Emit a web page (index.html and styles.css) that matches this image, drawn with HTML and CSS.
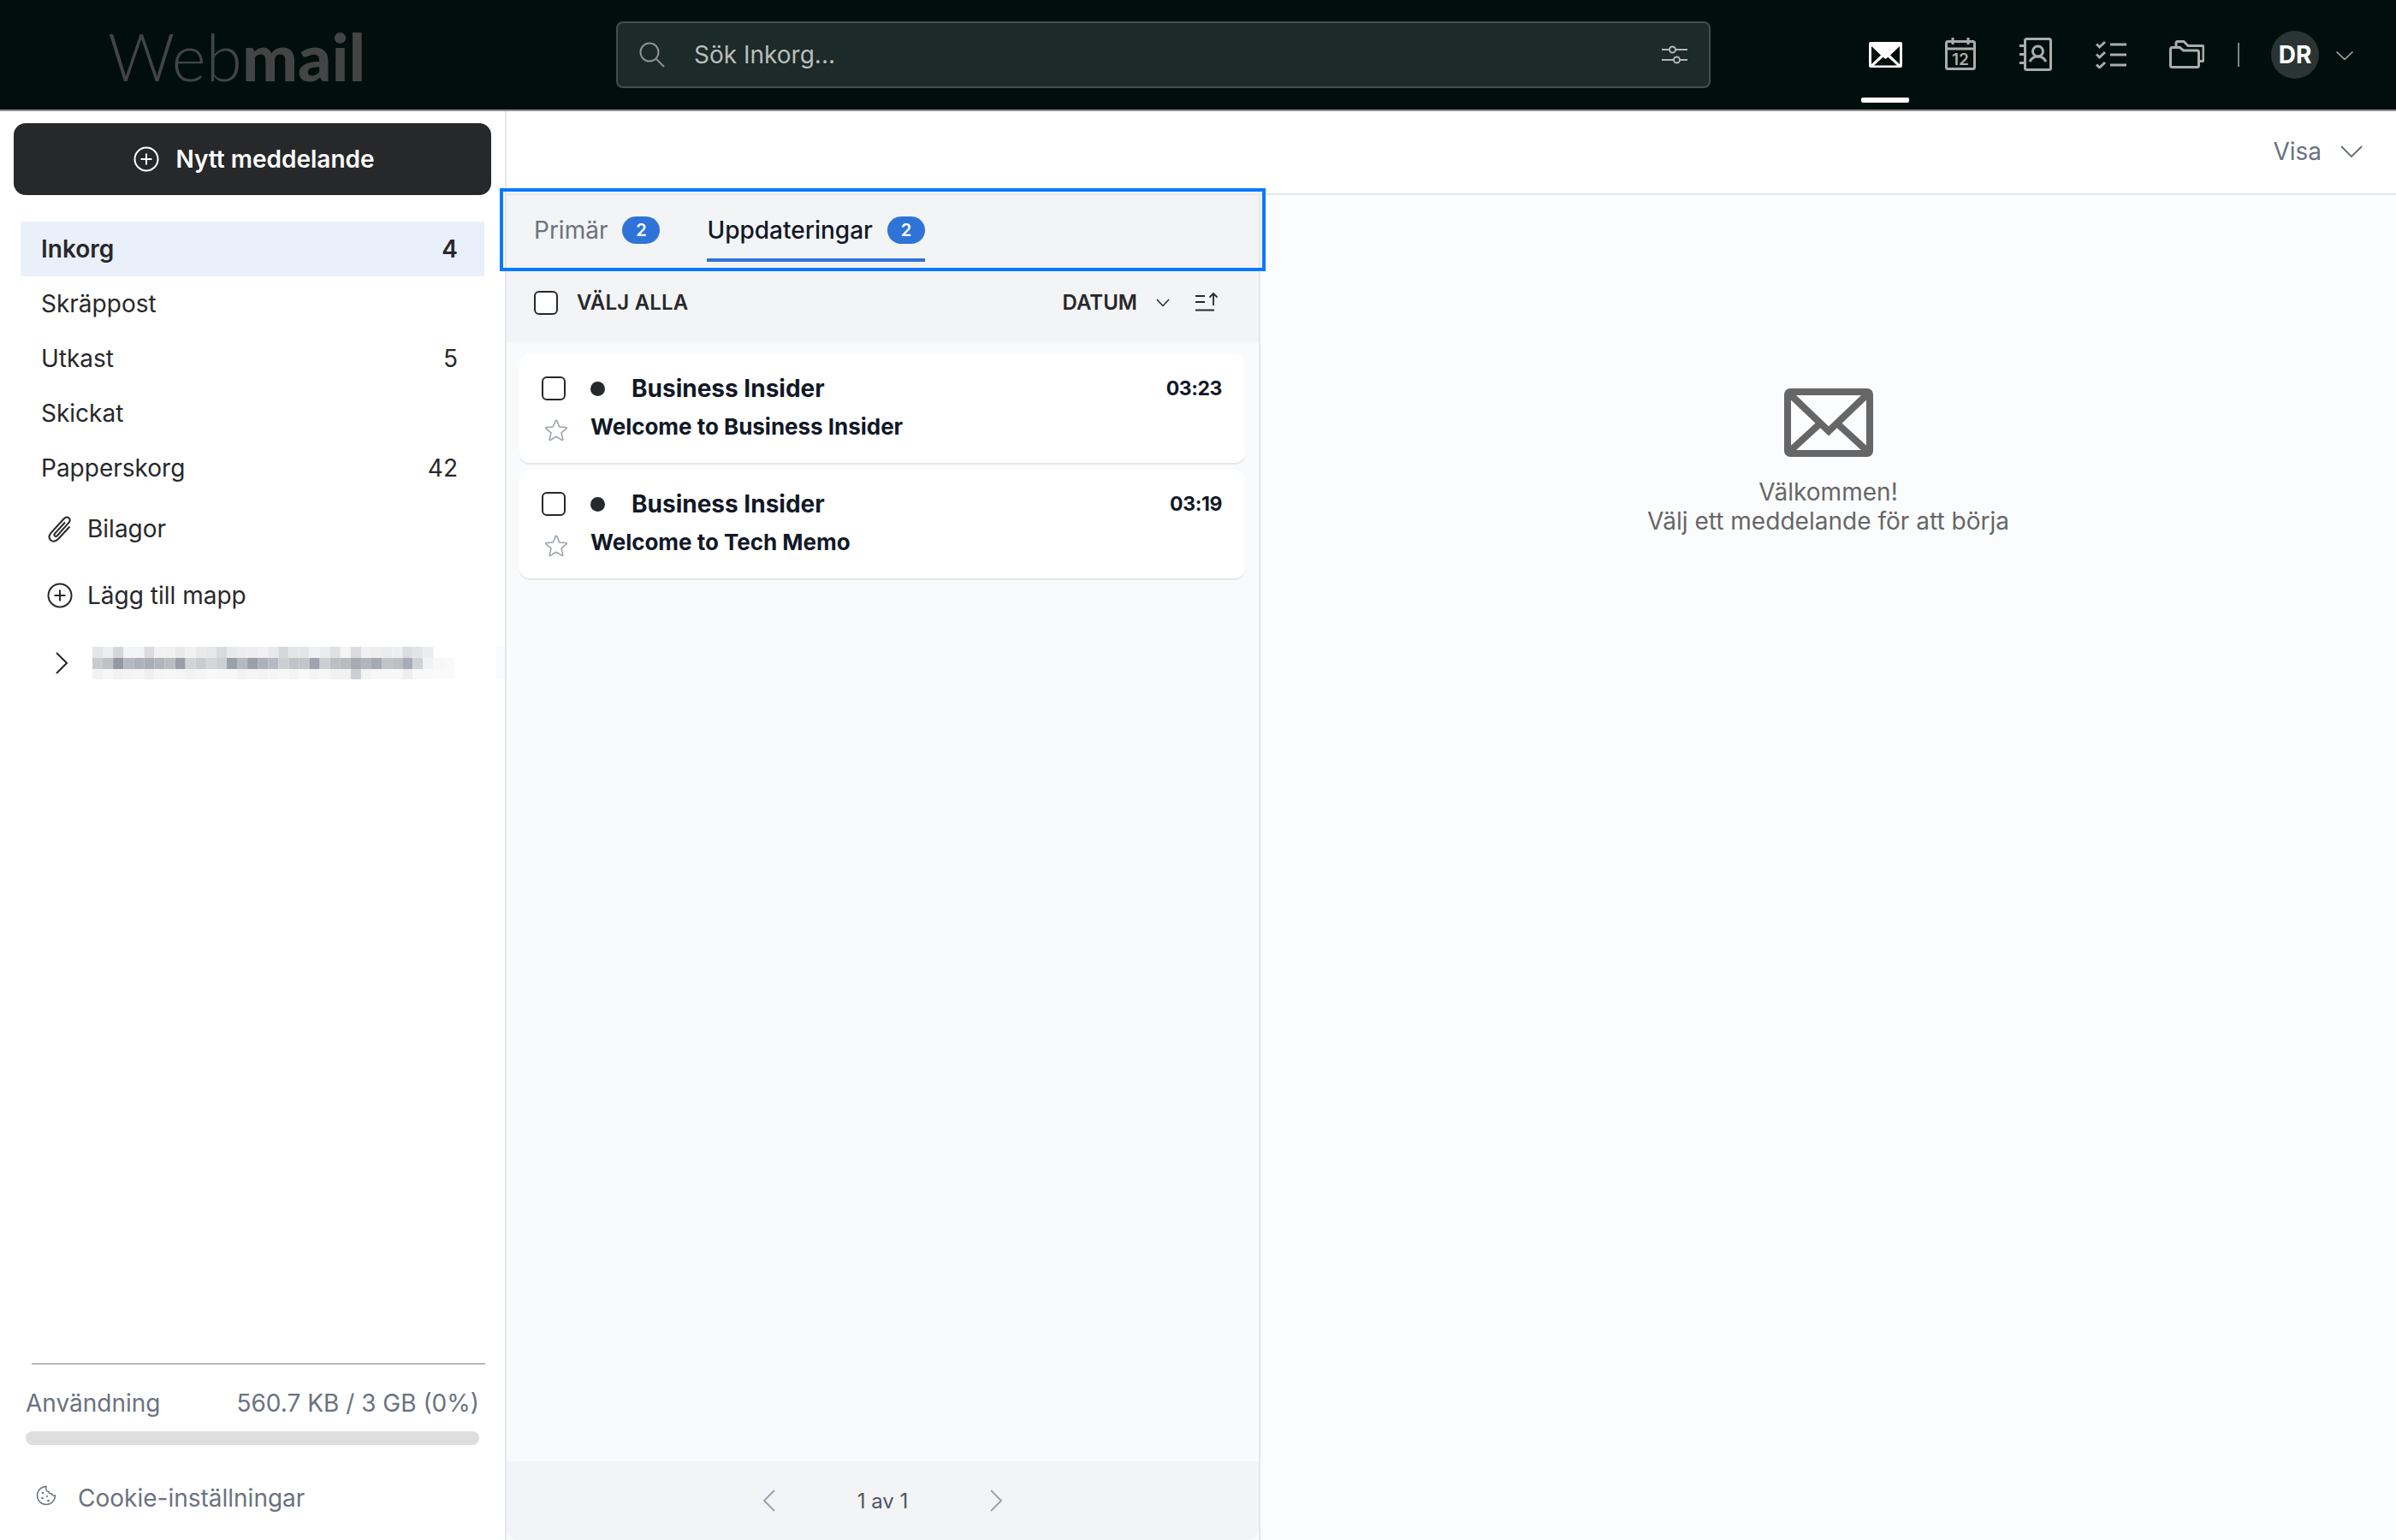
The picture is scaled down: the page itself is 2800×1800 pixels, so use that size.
FILE: index.html
```html
<!DOCTYPE html>
<html lang="sv">
<head>
<meta charset="utf-8">
<title>Webmail</title>
<link rel="stylesheet" href="styles.css">
</head>
<body>
<header class="topnav">
  <div class="logo"><span class="logo-thin">Web</span><span class="logo-bold">mail</span></div>
  <div class="search">
    <svg class="search-icon" viewBox="0 0 30 30"><circle cx="12" cy="12" r="10.500"/><path d="M20 20l9 9"/></svg>
    <span class="search-text">Sök Inkorg...</span>
    <svg class="search-filter" viewBox="0 0 30 24"><path d="M0 6h9M16 6h14M0 18h14M21 18h9"/><circle cx="12.500" cy="6" r="3.500"/><circle cx="17.500" cy="18" r="3.500"/></svg>
  </div>
  <nav class="apps">
    <div class="app app-active">
      <svg class="i-mail" viewBox="0 0 39 30"><rect width="39" height="30" rx="2" fill="#fff"/><path d="M3 5l11 10.500L3 26zM36 5L25 15.500 36 26zM6 27.500l10.500-9.800 3 2.300 3-2.300L33 27.500z" fill="#000f0c"/></svg>
    </div>
    <div class="app">
      <svg class="i-cal" viewBox="0 0 36 38"><rect x="1.500" y="4.500" width="33" height="32" rx="2"/><path d="M1.500 13h33M9 0v8M27 0v8"/><text x="18" y="32" class="cal-num">12</text></svg>
    </div>
    <div class="app">
      <svg class="i-contact" viewBox="0 0 38 39"><rect x="6.500" y="1.500" width="30" height="36" rx="2"/><circle cx="21.500" cy="16" r="6"/><path d="M12 28c2-4 5-6 9.500-6s7.500 2 9.500 6M0 9.500h6M0 19.500h6M0 29.500h6"/></svg>
    </div>
    <div class="app">
      <svg class="i-tasks" viewBox="0 0 36 33"><path d="M1 4.500l3.500 3.500L11 2M1 16.500l3.500 3.500L11 14M1 28.500l3.500 3.500L11 26"/><path d="M17 5h19M17 17h19M17 29h19"/></svg>
    </div>
    <div class="app">
      <svg class="i-folder" viewBox="0 0 41 33"><path d="M8 7V3.500c0-1 .700-2 2-2h7l5 5h16.500c1 0 1.500.700 1.500 1.500v15c0 1-.700 1.500-1.500 1.500H35"/><path d="M1.500 10.500c0-1 .700-2 2-2h9l4 3.500h16c1 0 2 .700 2 2v15.500c0 1-.700 2-2 2h-29c-1 0-2-.700-2-2z"/></svg>
    </div>
    <span class="nav-sep"></span>
    <div class="avatar">DR</div>
    <svg class="nav-chev" viewBox="0 0 20 10"><path d="M.500.500L10 9.500 19.500.500"/></svg>
  </nav>
</header>

<div class="shell">
  <aside class="sidebar">
    <button class="compose">
      <svg class="plus plus-light" viewBox="0 0 30 30"><circle cx="15" cy="15" r="13.500"/><path d="M15 8.500v13M8.500 15h13"/></svg>
      <span>Nytt meddelande</span>
    </button>
    <ul class="folders">
      <li class="folder folder-active"><span>Inkorg</span><span>4</span></li>
      <li class="folder"><span>Skräppost</span></li>
      <li class="folder"><span>Utkast</span><span>5</span></li>
      <li class="folder"><span>Skickat</span></li>
      <li class="folder"><span>Papperskorg</span><span>42</span></li>
    </ul>
    <div class="extra extra-attach">
      <svg class="clip" viewBox="0 0 28 32"><path d="M25.500 13.500L12 28c-3 3-6.500 3.200-8.800 1.200-2.300-2.200-2.200-5.500.600-8.600L18.500 4.500c1.900-2.100 4.300-2.500 6-1.100 1.700 1.500 1.500 3.800-.300 5.800L11 24c-1 1-2.200 1.100-3 .400-.800-.800-.700-2 .300-3.100L20 8.500"/></svg>
      <span>Bilagor</span>
    </div>
    <div class="extra extra-add">
      <svg class="plus" viewBox="0 0 30 30"><circle cx="15" cy="15" r="13.500"/><path d="M15 8.500v13M8.500 15h13"/></svg>
      <span>Lägg till mapp</span>
    </div>
    <div class="account">
      <svg class="acc-chev" viewBox="0 0 14 26"><path d="M1 1l12 12L1 25"/></svg>
      <svg class="pixels" viewBox="0 0 484 38" preserveAspectRatio="none" aria-hidden="true">
        <g class="r1">
          <rect x="0" fill="#e4e5e9"/><rect x="12" fill="#ecedef"/><rect x="24" fill="#d4d6da"/><rect x="36" fill="#f3f4f6"/><rect x="48" fill="#f3f4f6"/><rect x="60" fill="#dbdde0"/><rect x="72" fill="#f1f1f2"/><rect x="84" fill="#f1f1f2"/><rect x="96" fill="#e8e9eb"/><rect x="108" fill="#f2f2f2"/><rect x="120" fill="#e8e9eb"/><rect x="132" fill="#e6e7e9"/><rect x="144" fill="#d9dade"/><rect x="156" fill="#e8e9eb"/><rect x="168" fill="#ecedef"/><rect x="180" fill="#eeeef0"/><rect x="192" fill="#f0f1f3"/><rect x="204" fill="#e8e9eb"/><rect x="216" fill="#d4d8da"/><rect x="228" fill="#e4e5e7"/><rect x="240" fill="#e4e5e7"/><rect x="252" fill="#f0f1f3"/><rect x="264" fill="#ebecee"/><rect x="276" fill="#dfe0e3"/><rect x="288" fill="#f4f4f4"/><rect x="300" fill="#dadbdf"/><rect x="312" fill="#f1f1f2"/><rect x="324" fill="#eeeef0"/><rect x="336" fill="#ebecee"/><rect x="348" fill="#eeeff0"/><rect x="360" fill="#dcdde1"/><rect x="372" fill="#e3e4e6"/><rect x="384" fill="#ebecee"/>
        </g>
        <g class="r2">
          <rect x="0" fill="#c8ccd0"/><rect x="12" fill="#c0c1c5"/><rect x="24" fill="#9498a2"/><rect x="36" fill="#b5b9c2"/><rect x="48" fill="#adb1ba"/><rect x="60" fill="#a9adb6"/><rect x="72" fill="#b0b4bb"/><rect x="84" fill="#bcbcc0"/><rect x="96" fill="#9a9ea6"/><rect x="108" fill="#d2d3d6"/><rect x="120" fill="#c8cbcf"/><rect x="132" fill="#d3d6da"/><rect x="144" fill="#cdd0d3"/><rect x="156" fill="#9ba1a9"/><rect x="168" fill="#b4b9c0"/><rect x="180" fill="#9b9fa7"/><rect x="192" fill="#adb1ba"/><rect x="204" fill="#b6bac2"/><rect x="216" fill="#cbcfd3"/><rect x="228" fill="#c0c3c8"/><rect x="240" fill="#c2c5c9"/><rect x="252" fill="#9fa3ad"/><rect x="264" fill="#cbced3"/><rect x="276" fill="#bcc0c4"/><rect x="288" fill="#b8bcbe"/><rect x="300" fill="#a6abb2"/><rect x="312" fill="#b2b6bc"/><rect x="324" fill="#a6aab2"/><rect x="336" fill="#c2c3c7"/><rect x="348" fill="#bcc0c3"/><rect x="360" fill="#a8acb7"/><rect x="372" fill="#cdd2d5"/><rect x="384" fill="#f0f1f3"/><rect x="396" fill="#f7f7f8"/><rect x="408" fill="#f9f9f9"/>
        </g>
        <g class="r3">
          <rect x="0" fill="#f3f3f4"/><rect x="12" fill="#f6f7f7"/><rect x="24" fill="#f1f2f4"/><rect x="36" fill="#f4f4f5"/><rect x="48" fill="#f5f5f5"/><rect x="60" fill="#eeeff1"/><rect x="72" fill="#f6f6f6"/><rect x="84" fill="#f6f7f7"/><rect x="96" fill="#f5f5f6"/><rect x="108" fill="#f1f2f3"/><rect x="120" fill="#f3f4f5"/><rect x="132" fill="#f8f9f9"/><rect x="144" fill="#f7f7f8"/><rect x="156" fill="#f7f7f8"/><rect x="168" fill="#f1f2f4"/><rect x="180" fill="#f5f5f6"/><rect x="192" fill="#f3f3f4"/><rect x="204" fill="#f6f6f7"/><rect x="216" fill="#f8f8f8"/><rect x="228" fill="#f3f4f6"/><rect x="240" fill="#f8f9f9"/><rect x="252" fill="#f3f4f6"/><rect x="264" fill="#f8f8f8"/><rect x="276" fill="#f0f1f3"/><rect x="288" fill="#f0f1f3"/><rect x="300" fill="#ccd0d4"/><rect x="312" fill="#f3f3f4"/><rect x="324" fill="#f7f7f8"/><rect x="336" fill="#f6f7f8"/><rect x="348" fill="#f7f8f8"/><rect x="360" fill="#edeef0"/><rect x="372" fill="#f9f9f9"/><rect x="384" fill="#f9f9f9"/><rect x="396" fill="#fafafa"/><rect x="408" fill="#fafafa"/>
        </g>
        <rect class="ghost" x="469" fill="#fafafa"/>
      </svg>
    </div>
    <div class="side-foot">
      <div class="usage"><span>Användning</span><span>560.7 KB / 3 GB (0%)</span></div>
      <div class="meter"></div>
      <div class="cookies">
        <svg class="cookie" viewBox="0 0 24 24"><path d="M12 1.500a10.500 10.500 0 1 0 10.500 10.500c-2 .500-3.500-.300-4-2-1.800.200-3.300-.800-3.500-2.500-2 0-3.300-1.200-3-3-.500-1-.500-2 0-3z"/><circle class="crumb" cx="8" cy="9" r="1.300"/><circle class="crumb" cx="7.500" cy="15" r="1.300"/><circle class="crumb" cx="13" cy="13" r="1.100"/><circle class="crumb" cx="14.500" cy="18" r="1.300"/></svg>
        <span>Cookie-inställningar</span>
      </div>
    </div>
  </aside>

  <main class="main">
    <div class="viewbar">
      <span>Visa</span>
      <svg class="view-chev" viewBox="0 0 26 14"><path d="M1 1l12 12L25 1"/></svg>
    </div>
    <div class="panes">
      <section class="list">
        <div class="tabs">
          <div class="tab"><span>Primär</span><span class="badge">2</span></div>
          <div class="tab tab-active"><span>Uppdateringar</span><span class="badge">2</span></div>
          <div class="focus-ring"></div>
        </div>
        <div class="toolbar">
          <span class="check"></span>
          <span class="select-all">VÄLJ ALLA</span>
          <span class="sort-label">DATUM</span>
          <svg class="sort-chev" viewBox="0 0 16 10"><path d="M1 1l7 7.500L15 1"/></svg>
          <svg class="sort-icon" viewBox="0 0 28 23"><path d="M0 5h11M0 12h11M0 21.500h22M21 16V2M16.500 6.500L21 2l4.500 4.500"/></svg>
        </div>
        <div class="messages">
          <article class="message">
            <span class="check"></span>
            <div class="sender"><span class="dot"></span><span>Business Insider</span></div>
            <time class="time">03:23</time>
            <svg class="star" viewBox="0 0 24 24"><path d="M11.480 3.499a.562.562 0 011.040 0l2.125 5.111a.563.563 0 00.475.345l5.518.442c.499.040.701.663.321.988l-4.204 3.602a.563.563 0 00-.182.557l1.285 5.385a.562.562 0 01-.840.610l-4.725-2.885a.562.562 0 00-.586 0L6.982 20.540a.562.562 0 01-.840-.610l1.285-5.386a.562.562 0 00-.182-.557l-4.204-3.602a.563.563 0 01.321-.988l5.518-.442a.563.563 0 00.475-.345L11.480 3.500z"/></svg>
            <div class="subject">Welcome to Business Insider</div>
          </article>
          <article class="message">
            <span class="check"></span>
            <div class="sender"><span class="dot"></span><span>Business Insider</span></div>
            <time class="time">03:19</time>
            <svg class="star" viewBox="0 0 24 24"><path d="M11.480 3.499a.562.562 0 011.040 0l2.125 5.111a.563.563 0 00.475.345l5.518.442c.499.040.701.663.321.988l-4.204 3.602a.563.563 0 00-.182.557l1.285 5.385a.562.562 0 01-.840.610l-4.725-2.885a.562.562 0 00-.586 0L6.982 20.540a.562.562 0 01-.840-.610l1.285-5.386a.562.562 0 00-.182-.557l-4.204-3.602a.563.563 0 01.321-.988l5.518-.442a.563.563 0 00.475-.345L11.480 3.500z"/></svg>
            <div class="subject">Welcome to Tech Memo</div>
          </article>
        </div>
        <div class="pager">
          <svg class="pager-chev" viewBox="0 0 14 26"><path d="M13 1L1 13l12 12"/></svg>
          <span>1 av 1</span>
          <svg class="pager-chev" viewBox="0 0 14 26"><path d="M1 1l12 12L1 25"/></svg>
        </div>
      </section>
      <section class="reader">
        <svg class="empty-mail" viewBox="0 0 104 80"><rect x="4" y="4" width="96" height="72" rx="3"/><path d="M6 6l46 44L98 6M6 74l36-33M98 74L62 41"/></svg>
        <p class="welcome">Välkommen!<br>Välj ett meddelande för att börja</p>
      </section>
    </div>
  </main>
</div>
</body>
</html>
```

FILE: styles.css
```css
* { box-sizing: border-box; }
html, body { margin: 0; padding: 0; }
body {
  width: 2800px;
  height: 1800px;
  overflow: hidden;
  display: flex;
  flex-direction: column;
  font-family: "Inter", "Liberation Sans", sans-serif;
  font-size: 28px;
  color: #27282a;
  background: #fff;
}
svg { display: block; flex: none; fill: none; }

/* top navigation */
.topnav {
  height: 130px;
  flex: none;
  display: flex;
  align-items: flex-start;
  background: #000f0c;
  border-bottom: 2px solid #8d918f;
}
.logo {
  width: 720px;
  padding: 20px 0 0 126px;
  font-family: "Lato", sans-serif;
  font-size: 77px;
  line-height: 90px;
  color: #434444;
}
.logo-thin { font-weight: 300; }
.logo-bold { font-weight: 900; }
.search {
  width: 1279px;
  height: 78px;
  margin-top: 25px;
  padding: 0 25px;
  display: flex;
  align-items: center;
  background: #1c2a28;
  border: 2px solid #414f4c;
  border-radius: 8px;
}
.search-icon { width: 30px; height: 30px; stroke: #8c9492; stroke-width: 2; }
.search-text { margin-left: 34px; flex: 1; color: #b9bdbc; font-size: 28px; }
.search-filter { width: 30px; height: 24px; stroke: #b2b6b5; stroke-width: 2; }
.apps {
  flex: 1;
  display: flex;
  align-items: flex-start;
  padding-left: 176px;
}
.app {
  width: 56px;
  height: 128px;
  margin-right: 32px;
  display: flex;
  justify-content: center;
  position: relative;
}
.app svg { stroke: #a9adab; stroke-width: 3; }
.app-active::after {
  content: "";
  position: absolute;
  left: 0;
  right: 0;
  top: 114px;
  height: 6px;
  border-radius: 2px;
  background: #fff;
}
.i-mail { width: 39px; height: 30px; margin-top: 49px; stroke: none !important; }
.i-cal { width: 36px; height: 38px; margin-top: 44px; }
.cal-num {
  fill: #a9adab;
  stroke: none;
  font-family: "Inter", sans-serif;
  font-size: 19px;
  font-weight: 600;
  text-anchor: middle;
}
.i-contact { width: 38px; height: 39px; margin-top: 44px; }
.i-tasks { width: 36px; height: 33px; margin-top: 47px; }
.i-folder { width: 41px; height: 33px; margin-top: 47px; }
.nav-sep { width: 2px; height: 28px; margin: 50px 37px 0 0; background: #7f8482; }
.avatar {
  width: 56px;
  height: 56px;
  margin-top: 36px;
  border-radius: 50%;
  background: #2a3533;
  color: #fff;
  font-size: 28px;
  font-weight: 700;
  display: flex;
  align-items: center;
  justify-content: center;
}
.nav-chev { width: 20px; height: 10px; margin: 60px 0 0 20px; stroke: #a9adab; stroke-width: 1.500; }

/* shell */
.shell { flex: 1; display: flex; min-height: 0; }

/* sidebar */
.sidebar {
  width: 592px;
  flex: none;
  display: flex;
  flex-direction: column;
  padding: 14px 16px 0;
  border-right: 2px solid #e5e7eb;
  background: #fff;
}
.compose {
  width: 558px;
  height: 84px;
  flex: none;
  display: flex;
  align-items: center;
  justify-content: center;
  gap: 19px;
  padding: 0 0 0 4px;
  border: 0;
  border-radius: 14px;
  background: #27282a;
  color: #fff;
  font-family: inherit;
  font-size: 28px;
  font-weight: 600;
}
.plus { width: 30px; height: 30px; stroke: #27282a; stroke-width: 2; }
.plus-light { stroke: #fff; }
.folders { list-style: none; margin: 31px 8px 0; padding: 0; }
.folder {
  height: 64px;
  padding: 0 31px 0 24px;
  display: flex;
  align-items: center;
  justify-content: space-between;
}
.folder-active { background: #e9f0f9; font-weight: 600; }
.extra { display: flex; align-items: center; padding-left: 40px; gap: 17px; }
.extra-attach { height: 78px; }
.extra-add { height: 78px; padding-left: 39px; }
.clip { width: 28px; height: 32px; stroke: #27282a; stroke-width: 2; margin-right: 1px; }
.account { display: flex; align-items: center; height: 79px; padding-left: 49px; }
.acc-chev { width: 14px; height: 26px; stroke: #27282a; stroke-width: 2; }
.pixels { width: 487px; height: 38px; margin-left: 29px; }
.pixels rect { width: 12px; }
.pixels .r1 rect { y: 0; height: 13px; }
.pixels .r2 rect { y: 13px; height: 13px; }
.pixels .r3 rect { y: 26px; height: 12px; }
.pixels .ghost { y: 0; width: 10px; height: 38px; }
.side-foot { margin-top: auto; padding-bottom: 32px; color: #6b7280; }
.usage {
  margin: 0 14px;
  padding-top: 29px;
  display: flex;
  justify-content: space-between;
  position: relative;
  line-height: 36px;
}
.usage::before {
  content: "";
  position: absolute;
  top: 0;
  left: 7px;
  right: -7px;
  height: 2px;
  background: #b4b9b7;
}
.meter { height: 16px; margin: 15px 14px 0; border-radius: 8px; background: #dedede; }
.cookies { display: flex; align-items: center; gap: 25px; margin: 45px 0 0 26px; }
.cookie { width: 24px; height: 24px; margin-top: -6px; stroke: #6b7280; stroke-width: 1.500; }
.crumb { fill: #6b7280; stroke: none; }

/* main */
.main { flex: 1; min-width: 0; display: flex; flex-direction: column; }
.viewbar {
  height: 98px;
  flex: none;
  display: flex;
  align-items: center;
  justify-content: flex-end;
  gap: 22px;
  padding: 0 39px 2px 0;
  border-bottom: 2px solid #e5e7eb;
  color: #6b7280;
}
.view-chev { width: 26px; height: 14px; stroke: #6b7280; stroke-width: 2; }
.panes { flex: 1; min-height: 0; display: flex; }

/* message list */
.list {
  width: 881px;
  flex: none;
  display: flex;
  flex-direction: column;
  border-right: 2px solid #e5e7eb;
  background: #f9fafb;
}
.tabs {
  height: 79px;
  flex: none;
  display: flex;
  align-items: flex-start;
  gap: 55px;
  padding-left: 32px;
  background: #f3f4f6;
  position: relative;
}
.tab {
  height: 78px;
  padding-top: 21px;
  display: flex;
  align-items: flex-start;
  gap: 17px;
  color: #6b7280;
  line-height: 40px;
}
.tab-active { color: #111827; font-weight: 500; border-bottom: 4px solid #2f73d9; }
.badge {
  width: 44px;
  height: 32px;
  margin-top: 4px;
  border-radius: 16px;
  background: #2f73d9;
  color: #fff;
  font-size: 20px;
  font-weight: 600;
  line-height: 32px;
  text-align: center;
}
.focus-ring {
  position: absolute;
  inset: -8px -8px -10px -8px;
  border: 4px solid #0a78ff;
  pointer-events: none;
}
.toolbar {
  height: 93px;
  flex: none;
  padding: 0 46px 0 32px;
  display: flex;
  align-items: center;
  background: #f3f4f6;
}
.check {
  width: 28px;
  height: 28px;
  flex: none;
  background: #fff;
  border: 2px solid #27282a;
  border-radius: 6px;
}
.select-all { margin-left: 22px; flex: 1; font-size: 24px; font-weight: 600; letter-spacing: .2px; }
.sort-label { font-size: 24px; font-weight: 600; }
.sort-chev { width: 16px; height: 10px; margin-left: 22px; stroke: #27282a; stroke-width: 1.500; }
.sort-icon { width: 28px; height: 23px; margin: -2px 0 0 30px; stroke: #27282a; stroke-width: 1.800; }
.messages { flex: 1; padding: 14px 16px 0 15px; }
.message {
  height: 127px;
  margin-bottom: 8px;
  padding: 26px 27px 0 26px;
  display: grid;
  grid-template-columns: 57px 1fr auto;
  grid-template-rows: 28px 36px;
  row-gap: 12px;
  align-items: center;
  background: #fff;
  border-radius: 12px;
  box-shadow: 0 2px 0 #e5e7eb;
}
.sender { display: flex; align-items: center; color: #111827; font-weight: 700; }
.dot { width: 17px; height: 17px; margin-right: 31px; border-radius: 50%; background: #27282a; }
.time { color: #111827; font-size: 23px; font-weight: 700; letter-spacing: -.4px; }
.star { width: 32px; height: 32px; margin: 10px 0 0 1px; stroke: #9ca3af; stroke-width: 1.200; }
.subject { grid-column: 2 / 4; color: #111827; font-size: 26px; font-weight: 700; letter-spacing: -.02px; }
.pager {
  height: 92px;
  flex: none;
  display: flex;
  align-items: center;
  justify-content: center;
  gap: 96px;
  background: #f3f4f6;
  border-radius: 0 0 14px 14px;
  color: #4b5563;
  font-size: 24px;
}
.pager-chev { width: 14px; height: 26px; stroke: #9ca3af; stroke-width: 2; }

/* reading pane */
.reader {
  flex: 1;
  min-width: 0;
  display: flex;
  flex-direction: column;
  align-items: center;
  padding-top: 226px;
  background: #fbfcfd;
  color: #666;
}
.empty-mail { width: 104px; height: 80px; stroke: #666; stroke-width: 8; }
.welcome { margin: 24px 0 0; text-align: center; line-height: 34px; letter-spacing: .02px; }
```
